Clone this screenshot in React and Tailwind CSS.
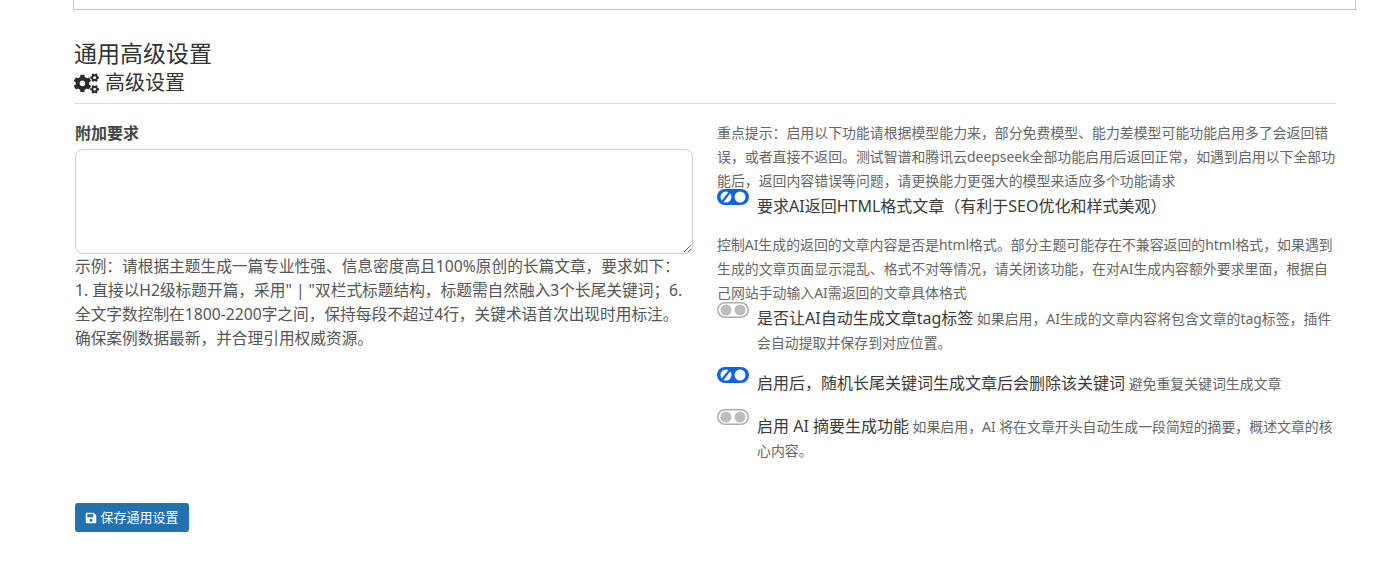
import { FaCogs, FaSave } from 'react-icons/fa'

const font = { fontFamily: '"Noto Sans", "Noto Sans CJK SC", sans-serif' }

function Toggle({ on }) {
  if (on) {
    return (
      <svg width="32" height="16" viewBox="0 0 32 16" className="block shrink-0">
        <rect width="32" height="16" rx="8" fill="#0d63e0" />
        <circle cx="9" cy="8" r="5.5" fill="#fff" />
        <path d="M5.5 12.5 12.5 3.5" stroke="#0d63e0" strokeWidth="2.2" />
        <circle cx="23" cy="8" r="5.5" fill="#fff" />
      </svg>
    )
  }
  return (
    <svg width="32" height="16" viewBox="0 0 32 16" className="block shrink-0">
      <rect x="0.75" y="0.75" width="30.5" height="14.5" rx="7.25" fill="#fff" stroke="#adadad" strokeWidth="1.5" />
      <circle cx="9" cy="8" r="5.5" fill="#bdbdbd" />
      <circle cx="23" cy="8" r="5.5" fill="#bdbdbd" />
    </svg>
  )
}

export default function App() {
  return (
    <div className="min-h-[563px] bg-white text-[#3a3a3a] overflow-hidden" style={font}>
      <div className="ml-[73px] mr-[44px] h-[10px] border-x border-b border-[#c4c4c4]" />

      <div className="ml-[74px] mr-[64px] mt-[28px]">
        <h2 className="text-[23px] leading-[30px] text-[#333]">通用高级设置</h2>
        <h3 className="flex items-center h-[30px] text-[20px] leading-[30px] text-[#333]">
          <FaCogs size={25} className="mr-[6px] text-[#2b2b2b]" />
          高级设置
        </h3>
        <div className="mt-[5px] border-t border-[#dedede]" />

        <div className="flex mt-[17px] pl-px">
          <div className="w-[618px] shrink-0">
            <label className="block text-[16px] leading-[24px] font-bold text-[#444]">附加要求</label>
            <textarea className="block w-full h-[105px] mt-[4px] border border-[#cfcfcf] rounded-lg bg-white" />
            <p className="text-[15.7px] leading-[24px] text-[#555] w-[622px] whitespace-nowrap">
              示例：请根据主题生成一篇专业性强、信息密度高且100%原创的长篇文章，要求如下：<br />
              1. 直接以H2级标题开篇，采用" | "双栏式标题结构，标题需自然融入3个长尾关键词；6.<br />
              全文字数控制在1800-2200字之间，保持每段不超过4行，关键术语首次出现时用标注。<br />
              确保案例数据最新，并合理引用权威资源。
            </p>
          </div>

          <div className="ml-[24px] w-[620px] text-[13.9px] leading-[24px] text-[#666]">
            <p>
              重点提示：启用以下功能请根据模型能力来，部分免费模型、能力差模型可能功能启用多了会返回错误，或者直接不返回。测试智谱和腾讯云deepseek全部功能启用后返回正常，如遇到启用以下全部功能后，返回内容错误等问题，请更换能力更强大的模型来适应多个功能请求
            </p>
            <div className="relative pl-[40px] h-[40px]">
              <div className="absolute left-0 -top-[4px]"><Toggle on /></div>
              <span className="block pt-px text-[16px] leading-[24px] text-[#3a3a3a]">要求AI返回HTML格式文章（有利于SEO优化和样式美观）</span>
            </div>
            <p>
              控制AI生成的返回的文章内容是否是html格式。部分主题可能存在不兼容返回的html格式，如果遇到生成的文章页面显示混乱、格式不对等情况，请关闭该功能，在对AI生成内容额外要求里面，根据自己网站手动输入AI需返回的文章具体格式
            </p>
            <div className="relative pl-[40px] mt-px">
              <div className="absolute left-0 -top-[4px]"><Toggle /></div>
              <p><span className="text-[16px] text-[#3a3a3a]">是否让AI自动生成文章tag标签</span> 如果启用，AI生成的文章内容将包含文章的tag标签，插件会自动提取并保存到对应位置。</p>
            </div>
            <div className="relative pl-[40px] mt-[16px]">
              <div className="absolute left-0 -top-[4px]"><Toggle on /></div>
              <p><span className="text-[16px] text-[#3a3a3a]">启用后，随机长尾关键词生成文章后会删除该关键词</span> 避免重复关键词生成文章</p>
            </div>
            <div className="relative pl-[40px] mt-[18px]">
              <div className="absolute left-0 -top-[5px]"><Toggle /></div>
              <p><span className="text-[16px] text-[#3a3a3a]">启用 AI 摘要生成功能</span> 如果启用，AI 将在文章开头自动生成一段简短的摘要，概述文章的核心内容。</p>
            </div>
          </div>
        </div>

        <button className="flex items-center ml-px mt-[40px] h-[29px] w-[114px] justify-center gap-[3px] rounded-[3px] bg-[#2271b1] text-white text-[13px]">
          <FaSave size={12} />
          保存通用设置
        </button>
      </div>
    </div>
  )
}
